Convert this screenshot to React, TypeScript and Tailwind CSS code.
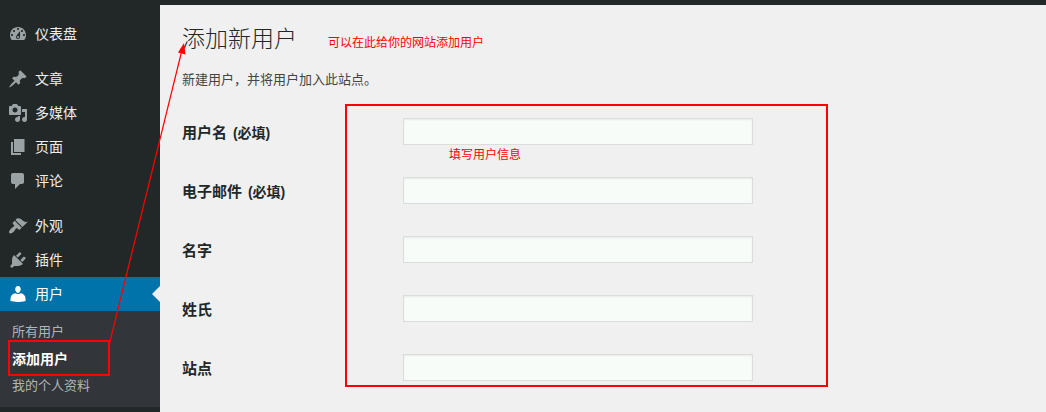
import type { ReactNode } from "react";

type MenuItem = {
  label: string;
  path: string;
  active?: boolean;
};

// 侧边栏菜单，按分隔线分组
const menuGroups: MenuItem[][] = [
  [
    {
      label: "仪表盘",
      path: "M3.76 16h12.48c1.1-1.37 1.76-3.11 1.76-5 0-4.42-3.58-8-8-8s-8 3.58-8 8c0 1.89.66 3.63 1.76 5zM10 4c.55 0 1 .45 1 1s-.45 1-1 1-1-.45-1-1 .45-1 1-1zM6 6c.55 0 1 .45 1 1s-.45 1-1 1-1-.45-1-1 .45-1 1-1zm8 0c.55 0 1 .45 1 1s-.45 1-1 1-1-.45-1-1 .45-1 1-1zm-5.37 5.55L12 7v6c0 1.1-.9 2-2 2s-2-.9-2-2c0-.57.24-1.08.63-1.45zM4 10c.55 0 1 .45 1 1s-.45 1-1 1-1-.45-1-1 .45-1 1-1zm12 0c.55 0 1 .45 1 1s-.45 1-1 1-1-.45-1-1 .45-1 1-1zm-5 3c0-.55-.45-1-1-1s-1 .45-1 1 .45 1 1 1 1-.45 1-1z",
    },
  ],
  [
    {
      label: "文章",
      path: "M10.44 3.02l1.82-1.82 6.36 6.35-1.83 1.82c-1.05-.68-2.48-.57-3.41.36l-.75.75c-.92.93-1.04 2.35-.35 3.41l-1.83 1.82-2.41-2.41-2.8 2.79c-.42.42-3.38 2.71-3.8 2.29s1.86-3.39 2.28-3.81l2.79-2.79L4.1 9.36l1.83-1.82c1.05.69 2.48.57 3.4-.36l.75-.75c.93-.92 1.05-2.35.36-3.41z",
    },
    {
      label: "多媒体",
      path: "M13 11V4c0-.55-.45-1-1-1h-1.67L9 1H5L3.67 3H2c-.55 0-1 .45-1 1v7c0 .55.45 1 1 1h10c.55 0 1-.45 1-1zM7 4.5c1.38 0 2.5 1.12 2.5 2.5S8.38 9.5 7 9.5 4.5 8.38 4.5 7 5.62 4.5 7 4.5zM14 6h5v10.5c0 1.38-1.12 2.5-2.5 2.5S14 17.88 14 16.5s1.12-2.5 2.5-2.5c.17 0 .34.02.5.05V9h-3V6zm-4 8.05V13h2v3.5c0 1.38-1.12 2.5-2.5 2.5S7 17.88 7 16.5 8.12 14 9.5 14c.17 0 .34.02.5.05z",
    },
    {
      label: "页面",
      path: "M6 15V2h10.500v13H6zm-1 1h8v2H3V5h2v11z",
    },
    {
      label: "评论",
      path: "M5 2h9c1.1 0 2 .9 2 2v7c0 1.1-.9 2-2 2h-2l-5 5v-5H5c-1.1 0-2-.9-2-2V4c0-1.1.9-2 2-2z",
    },
  ],
  [
    {
      label: "外观",
      path: "M14.48 11.06L7.41 3.99l1.5-1.5c.5-.56 2.3-.47 3.51.32 1.21.8 1.43 1.28 2.91 2.1 1.18.64 2.45 1.26 4.45.85zm-.71.71L6.7 4.7 4.93 6.47c-.39.39-.39 1.02 0 1.41l1.06 1.06c.39.39.39 1.03 0 1.42-.6.6-1.43 1.11-2.21 1.69-.35.26-.7.53-1.01.84C1.43 14.23.4 16.08 1.4 17.07c.99 1 2.84-.03 4.18-1.36.31-.31.58-.66.85-1.02.57-.78 1.08-1.61 1.69-2.21.39-.39 1.02-.39 1.41 0l1.06 1.06c.39.39 1.02.39 1.41 0z",
    },
    {
      label: "插件",
      path: "M13.11 4.36L9.87 7.6 8 5.73l3.24-3.24c.35-.34 1.05-.2 1.56.32.52.51.66 1.21.31 1.55zm-8 1.77l.91-1.12 9.01 9.01-1.19.84c-.71.71-2.63 1.16-3.82 1.16H6.14L4.9 17.26c-.59.59-1.54.59-2.12 0-.59-.58-.59-1.53 0-2.12l1.24-1.24v-3.88c0-1.13.4-3.19 1.09-3.89zm7.26 3.97l3.24-3.24c.34-.35 1.04-.21 1.55.31.52.51.66 1.21.31 1.55l-3.24 3.25z",
    },
    {
      label: "用户",
      path: "M10 8.9c-2.27 0-2.73-3.1-2.73-3.1C7 4.02 7.82 2 9.97 2c2.16 0 2.98 2.02 2.71 3.8 0 0-.41 3.1-2.68 3.1zM7.2 9.300C8 9.800 9 10.100 10 10.100s2-.3 2.8-.8c2.6.3 4.7 2.4 4.7 5.100v2.700s-3.750 1-7.500 1-7.500-1-7.500-1v-2.700c0-2.700 2.100-4.800 4.700-5.100z",
      active: true,
    },
  ],
];

const subMenu = [
  { label: "所有用户", current: false },
  { label: "添加用户", current: true },
  { label: "我的个人资料", current: false },
];

const fields = [
  { id: "user_login", label: "用户名", required: true, type: "text" },
  { id: "email", label: "电子邮件", required: true, type: "email" },
  { id: "first_name", label: "名字", required: false, type: "text" },
  { id: "last_name", label: "姓氏", required: false, type: "text" },
  { id: "url", label: "站点", required: false, type: "url" },
];

const Note = ({ className, children }: { className: string; children: ReactNode }) => (
  <span className={`text-xs leading-4 whitespace-nowrap text-[#f00] ${className}`}>{children}</span>
);

const MenuLink = ({ item }: { item: MenuItem }) => (
  <a
    href="#"
    className={`relative flex h-[34px] items-center gap-[7px] pl-2 text-sm ${
      item.active ? "bg-[#0073aa] text-white" : "text-[#eeeeee]"
    }`}
  >
    <svg
      viewBox="0 0 20 20"
      className={`size-5 shrink-0 ${item.active ? "fill-white" : "fill-[#9ba2a3]"}`}
      aria-hidden="true"
    >
      <path d={item.path} />
    </svg>
    {item.label}
    {item.active && (
      <span className="absolute top-1/2 right-0 -translate-y-1/2 border-y-8 border-r-8 border-y-transparent border-r-[#f0f0f0]" />
    )}
  </a>
);

const Sidebar = () => (
  <nav className="w-40 shrink-0 bg-[#222828] pt-3">
    <div className="flex flex-col gap-[11px]">
      {menuGroups.map((group, i) => (
        <div key={i}>
          {group.map((item) => (
            <MenuLink key={item.label} item={item} />
          ))}
        </div>
      ))}
    </div>
    <ul className="bg-[#32353a] pt-[7px] pb-2">
      {subMenu.map((item) => (
        <li key={item.label} className="relative">
          <a
            href="#"
            className={`flex h-[27px] items-center pl-3 ${
              item.current ? "text-sm font-bold text-white" : "text-[13px] text-[#b0b5b8]"
            }`}
          >
            {item.label}
          </a>
          {item.current && (
            <span className="pointer-events-none absolute -top-[5px] left-2 h-9 w-[102px] border-2 border-[#f00]" />
          )}
        </li>
      ))}
    </ul>
  </nav>
);

const UserForm = () => (
  <form className="relative">
    {fields.map((field) => (
      <div key={field.id} className="flex h-[59px] items-center">
        <label
          htmlFor={field.id}
          className="w-[221px] shrink-0 pt-[3px] text-[15px] font-bold text-[#222828]"
        >
          {field.label}
          {field.required && <span className="ml-[2px] text-sm"> (必填)</span>}
        </label>
        <input
          id={field.id}
          type={field.type}
          className="h-[27px] w-full max-w-[350px] border border-[#dadddc] bg-[#f7fcf9] px-1 text-sm shadow-[inset_0_1px_2px_rgba(0,0,0,0.07)] outline-none"
        />
      </div>
    ))}
    {/* 标注：填写区域 */}
    <div className="pointer-events-none absolute top-[2px] left-[163px] h-[283px] w-[483px] border-2 border-[#f00]" />
    <Note className="absolute top-[45px] left-[267px]">填写用户信息</Note>
  </form>
);

const App = () => {
  return (
    <div className="relative flex min-h-screen flex-col bg-[#f0f0f0] font-['Liberation_Sans','Noto_Sans_CJK_SC',sans-serif]">
      <header className="h-[5px] bg-[#222828]" />
      <div className="flex flex-1">
        <Sidebar />
        <main className="min-w-0 flex-1 pt-4 pl-[22px]">
          <div className="flex items-center gap-[31px]">
            <h1 className="text-[23px] leading-9 font-light text-[#222828]">添加新用户</h1>
            <Note className="pt-2">可以在此给你的网站添加用户</Note>
          </div>
          <p className="pt-[13px] pb-3 text-[13px] leading-5 text-[#444444]">
            新建用户，并将用户加入此站点。
          </p>
          <UserForm />
        </main>
      </div>
      {/* 箭头：从子菜单指向页面标题 */}
      <svg
        className="pointer-events-none absolute top-0 left-0"
        width="200"
        height="360"
        viewBox="0 0 200 360"
        aria-hidden="true"
      >
        <path d="M109.5 343.5L182 50" stroke="#f00" strokeWidth="1.2" fill="none" />
        <path d="M184 43L178 52.5L185.5 54.5z" fill="#f00" />
      </svg>
    </div>
  );
};

export default App;
